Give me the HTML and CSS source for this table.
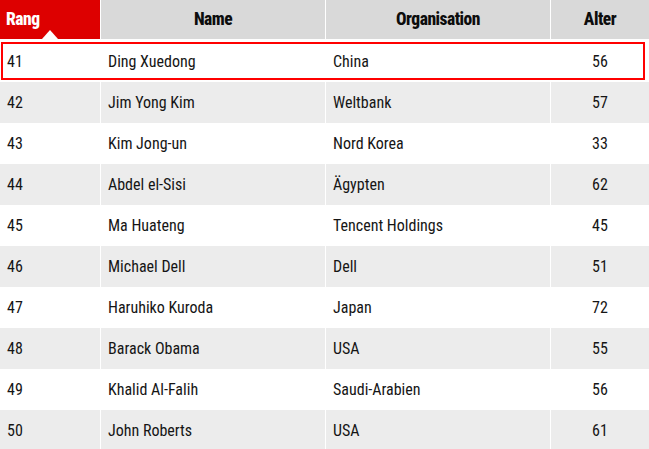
FILE: index.html
```html
<!DOCTYPE html>
<html>
<head>
<meta charset="utf-8">
<link rel="stylesheet" href="styles.css">
</head>
<body>
<div class="table">
  <div class="row head">
    <div class="cell rank-head">Rang<span class="caret"></span></div>
    <div class="cell center">Name</div>
    <div class="cell center">Organisation</div>
    <div class="cell center">Alter</div>
  </div>
  <div class="row selected">
    <div class="cell">41</div><div class="cell">Ding Xuedong</div><div class="cell">China</div><div class="cell center">56</div>
  </div>
  <div class="row alt">
    <div class="cell">42</div><div class="cell">Jim Yong Kim</div><div class="cell">Weltbank</div><div class="cell center">57</div>
  </div>
  <div class="row">
    <div class="cell">43</div><div class="cell">Kim Jong-un</div><div class="cell">Nord Korea</div><div class="cell center">33</div>
  </div>
  <div class="row alt">
    <div class="cell">44</div><div class="cell">Abdel el-Sisi</div><div class="cell">Ägypten</div><div class="cell center">62</div>
  </div>
  <div class="row">
    <div class="cell">45</div><div class="cell">Ma Huateng</div><div class="cell">Tencent Holdings</div><div class="cell center">45</div>
  </div>
  <div class="row alt">
    <div class="cell">46</div><div class="cell">Michael Dell</div><div class="cell">Dell</div><div class="cell center">51</div>
  </div>
  <div class="row">
    <div class="cell">47</div><div class="cell">Haruhiko Kuroda</div><div class="cell">Japan</div><div class="cell center">72</div>
  </div>
  <div class="row alt">
    <div class="cell">48</div><div class="cell">Barack Obama</div><div class="cell">USA</div><div class="cell center">55</div>
  </div>
  <div class="row">
    <div class="cell">49</div><div class="cell">Khalid Al-Falih</div><div class="cell">Saudi-Arabien</div><div class="cell center">56</div>
  </div>
  <div class="row alt">
    <div class="cell">50</div><div class="cell">John Roberts</div><div class="cell">USA</div><div class="cell center">61</div>
  </div>
</div>
</body>
</html>
```
FILE: styles.css
```css
html, body {
  margin: 0;
  padding: 0;
  background: #ffffff;
}
body {
  width: 649px;
  height: 449px;
  overflow: hidden;
  font-family: "Roboto", "Liberation Sans", sans-serif;
  font-stretch: condensed;
  color: #151515;
}
.table {
  display: flex;
  flex-direction: column;
}
.row {
  display: grid;
  grid-template-columns: 100px 224px 224px 98px;
  column-gap: 1px;
  height: 41px;
  background: #ffffff;
  position: relative;
}
.row .cell {
  display: flex;
  align-items: center;
  padding-left: 7px;
  font-size: 16px;
  background: #ffffff;
}
.row.alt .cell {
  background: #ececec;
}
.cell.center {
  justify-content: center;
  padding-left: 0;
}
.row.head {
  height: 39px;
  margin-bottom: 2px;
}
.row.head .cell {
  background: #d9d9d9;
  font-weight: 800;
  font-size: 17.5px;
  letter-spacing: -0.5px;
  color: #0d0d0d;
  padding-bottom: 2px;
}
.row.head .cell.rank-head {
  background: #dd0000;
  color: #ffffff;
  padding-left: 6px;
  position: relative;
}
.caret {
  position: absolute;
  left: 42px;
  bottom: 0;
  width: 0;
  height: 0;
  border-left: 8px solid transparent;
  border-right: 8px solid transparent;
  border-bottom: 9px solid #ffffff;
}
.row.selected::after {
  content: "";
  position: absolute;
  top: 1px;
  left: 1px;
  right: 4px;
  bottom: 2px;
  border: 2px solid #ff0000;
  pointer-events: none;
}
```
